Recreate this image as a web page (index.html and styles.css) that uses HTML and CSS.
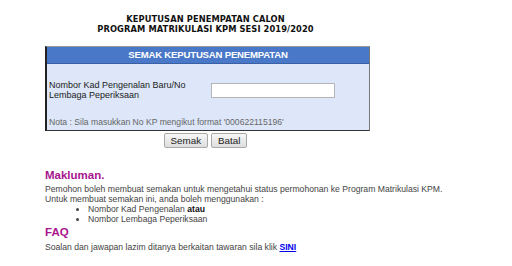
FILE: index.html
```html
<!DOCTYPE html>
<html lang="en">
<head>
  <meta charset="UTF-8">
  <meta name="viewport" content="width=device-width, initial-scale=1.0">
  <title>Keputusan Penempatan</title>
  <link rel="stylesheet" href="styles.css">
</head>
<body>
  <div class="page">
    <div class="title">
      KEPUTUSAN PENEMPATAN CALON<br>
      PROGRAM MATRIKULASI KPM SESI 2019/2020
    </div>

    <form class="panel">
      <div class="panel-head">SEMAK KEPUTUSAN PENEMPATAN</div>
      <div class="panel-body">
        <div class="row">
          <label class="label" for="nokp">Nombor Kad Pengenalan Baru/No Lembaga Peperiksaan</label>
          <input class="field" type="text" id="nokp">
        </div>
        <div class="note">Nota : Sila masukkan No KP mengikut format '000622115196'</div>
      </div>
    </form>
    <div class="actions">
      <button class="btn" type="button">Semak</button>
      <button class="btn" type="button">Batal</button>
    </div>

    <h2 class="heading">Makluman.</h2>
    <p class="text">
      Pemohon boleh membuat semakan untuk mengetahui status permohonan ke Program Matrikulasi KPM.<br>
      Untuk membuat semakan ini, anda boleh menggunakan :
    </p>
    <ul class="list">
      <li>Nombor Kad Pengenalan <b>atau</b></li>
      <li>Nombor Lembaga Peperiksaan</li>
    </ul>

    <h2 class="heading faq">FAQ</h2>
    <p class="text">Soalan dan jawapan lazim ditanya berkaitan tawaran sila klik <a href="#">SINI</a></p>
  </div>
</body>
</html>
```

FILE: styles.css
```css
body {
  margin: 8px;
  font-family: "Liberation Sans", Arial, sans-serif;
  background: #fff;
}
.page {
  padding-left: 37px;
}
.title {
  width: 321px;
  margin-top: 6px;
  text-align: center;
  font-family: "DejaVu Sans", Verdana, sans-serif;
  font-weight: bold;
  font-size: 8.3px;
  line-height: 10px;
  letter-spacing: 0.1px;
  color: #111;
}
.panel {
  width: 325px;
  box-sizing: border-box;
  margin: 12px 0 0;
  border: 1px solid;
  border-left-width: 2px;
  border-color: #999 #777 #333 #222;
  background: #dde7f9;
}
.panel-head {
  height: 16px;
  line-height: 16px;
  background: #4a78c8;
  border-bottom: 1px solid #3a5fa3;
  color: #fff;
  text-align: center;
  font-weight: bold;
  font-size: 9.6px;
  letter-spacing: -0.2px;
}
.panel-body {
  padding: 16px 0 3px 2px;
}
.row {
  display: flex;
  align-items: center;
}
.label {
  width: 162px;
  font-size: 9px;
  line-height: 10px;
  color: #222;
}
.field {
  width: 124px;
  height: 15px;
  box-sizing: border-box;
  margin: 0;
  border: 1px solid #b5b5b5;
  background: #fff;
}
.note {
  margin-top: 17px;
  font-size: 8.6px;
  line-height: 10px;
  color: #666;
}
.actions {
  width: 321px;
  margin-top: 2px;
  display: flex;
  justify-content: center;
  gap: 3px;
}
.btn {
  height: 15px;
  padding: 0 6px;
  border: 1px solid #a9a9a9;
  border-radius: 2px;
  background: linear-gradient(#f7f7f7, #dedede);
  font-family: "Liberation Sans", Arial, sans-serif;
  font-size: 9.8px;
  color: #222;
}
.heading {
  margin: 20px 0 2px;
  font-size: 11.5px;
  line-height: 14px;
  color: #a8158f;
}
.heading.faq {
  margin-top: 1px;
  margin-bottom: 3px;
}
.text {
  margin: 0;
  font-size: 8.65px;
  line-height: 10px;
  color: #444;
}
.text a {
  color: #0000ee;
  font-weight: bold;
}
.list {
  margin: 0;
  padding-left: 43px;
  font-size: 8.65px;
  line-height: 10px;
  color: #444;
}
.list b {
  color: #111;
}
```
